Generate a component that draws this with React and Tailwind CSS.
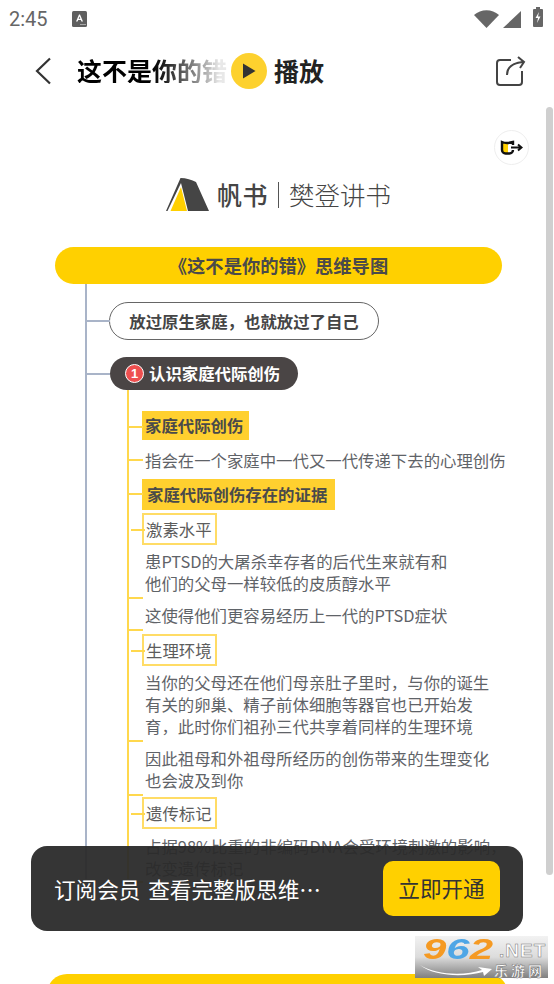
const cjk = { fontFamily: '"Noto Sans CJK SC", "Noto Sans", sans-serif' };

function Conn({ top }) {
  return <span className="absolute left-[-13px] h-[2px] w-[14px] bg-[#ffd84d]" style={{ top }} />;
}

function Fill({ children, conn, mt, w, h, pl }) {
  return (
    <div className={`relative ${mt} ${w} ${h} ${pl} flex items-center bg-[#ffd02f] text-[16.4px] font-bold text-[#4a4a4a]`}>
      <Conn top={conn} />
      {children}
    </div>
  );
}

function Outline({ children, conn, mt }) {
  return (
    <div className={`relative ${mt} w-[75px] h-[32px] pl-[2px] flex items-center border-2 border-[#ffdc66] text-[16.4px] text-[#5c5c5c]`}>
      <Conn top={conn} />
      {children}
    </div>
  );
}

function Body({ children, conn, mt }) {
  return (
    <div className={`relative ${mt} pl-[3px] text-[16.4px] leading-[22px] text-[#5f6368] whitespace-nowrap`}>
      <Conn top={conn} />
      {children}
    </div>
  );
}

export default function App() {
  return (
    <div className="relative w-[554px] h-[984px] overflow-hidden bg-white flex flex-col" style={cjk}>
      {/* status bar */}
      <div className="h-[40px] flex items-center pl-[9px] pr-[11px] shrink-0">
        <span className="text-[20px] text-[#666] w-[63px] mb-[2px]" style={{ fontFamily: "Roboto, sans-serif" }}>2:45</span>
        <svg className="mb-[2px]" width="15" height="16" viewBox="0 0 15 16">
          <rect width="15" height="16" rx="1.5" fill="#5f5f5f" />
          <path d="M4 10.5 L7 3.5 h1 L11 10.5 h-1.6 l-.6-1.5 h-2.6 l-.6 1.5z M6.7 7.8 h1.6 L7.5 5.6z" fill="#fff" />
          <circle cx="9" cy="13.5" r=".6" fill="#fff" /><circle cx="11" cy="13.5" r=".6" fill="#fff" /><circle cx="13" cy="13.5" r=".6" fill="#fff" />
        </svg>
        <div className="flex-1" />
        <svg width="25" height="18" viewBox="0 0 25 18" className="mb-[2px]"><path d="M0 5 C7 -1.5 18 -1.5 25 5 L12.5 18z" fill="#666" /></svg>
        <svg className="ml-[4px] mb-[2px]" width="18" height="17" viewBox="0 0 18 17"><path d="M18 0 V17 H0z" fill="#666" /></svg>
        <svg className="ml-[12px] mb-[6px]" width="10" height="20" viewBox="0 0 10 20">
          <path d="M3 0 h4 v2 h2 a1 1 0 0 1 1 1 v16 a1 1 0 0 1 -1 1 h-8 a1 1 0 0 1 -1 -1 v-16 a1 1 0 0 1 1 -1 h2z" fill="#666" />
          <path d="M6 5 L2.5 11 h2.5 l-1 5 L7.5 9.5 h-2.5z" fill="#fff" />
        </svg>
      </div>

      {/* header */}
      <div className="h-[62px] shrink-0 flex items-center pl-[35px] pr-[28px]">
        <svg width="17" height="28" viewBox="0 0 17 28" fill="none" stroke="#333" strokeWidth="2.2"><path d="M15 1.5 L2 14 L15 26.5" /></svg>
        <span className="ml-[25px] mb-[2px] text-[25px] font-bold leading-none bg-linear-to-r from-black from-45% to-[#e8e8e8] to-95% bg-clip-text text-transparent whitespace-nowrap">这不是你的错</span>
        <span className="ml-[4px] w-[36px] h-[36px] rounded-full bg-[#fdd12e] flex items-center justify-center shrink-0">
          <svg width="14" height="16" viewBox="0 0 14 16"><path d="M1 0.5 L13.5 8 L1 15.5z" fill="#333" /></svg>
        </span>
        <span className="ml-[7px] mb-[2px] text-[25px] font-bold leading-none text-[#222] whitespace-nowrap">播放</span>
        <div className="flex-1" />
        <svg width="30" height="30" viewBox="0 0 30 30" fill="none" stroke="#444" strokeWidth="2">
          <path d="M15 4 H4 a3 3 0 0 0 -3 3 V26 a3 3 0 0 0 3 3 H23 a3 3 0 0 0 3 -3 V15" />
          <path d="M11 19 C11 12 16 7 27 6 M22 1 L28 6 L24 12" />
        </svg>
      </div>

      {/* scroll content */}
      <div className="flex-1 flex flex-col pl-[55px]">
        {/* logo */}
        <div className="mt-[74px] h-[37px] ml-[111px] flex items-center text-[#454545] whitespace-nowrap">
          <svg width="43" height="33" viewBox="0 0 43 33">
            <path d="M0 33 L14.5 0 C20 0 26 2 30 4 L43 33 H22 L15 5 L1.5 33z" fill="#454545" />
            <path d="M4.5 33 L15 9 L21 33z" fill="#ffd000" />
          </svg>
          <span className="ml-[8px] mb-[1px] text-[25px] tracking-[0.5px] font-medium leading-none">帆书</span>
          <span className="ml-[10px] w-[1px] h-[26px] bg-[#555]" />
          <span className="ml-[10px] mb-[2px] text-[25.5px] font-light leading-none">樊登讲书</span>
        </div>

        {/* root */}
        <div className="mt-[34px] w-[447px] h-[37px] rounded-[19px] bg-[#ffd000] flex items-center justify-center text-[18.3px] font-bold text-[#4a4a4a] shrink-0">
          《这不是你的错》思维导图
        </div>

        {/* trunk */}
        <div className="ml-[30px] w-[420px] border-l-2 border-[#a9b4c8] pt-[18px]">
          <div className="relative ml-[22px] w-[270px] h-[38px] rounded-[19px] border-[1.5px] border-[#666] flex items-center justify-center text-[16.4px] font-bold text-[#454545]">
            <span className="absolute left-[-24px] top-[17px] w-[24px] h-[2px] bg-[#a9b4c8]" />
            放过原生家庭，也就放过了自己
          </div>
          <div className="relative mt-[17px] ml-[23px] w-[188px] h-[33px] rounded-[17px] bg-[#4a4545] flex items-center pl-[15px] gap-[5px] text-[16.4px] font-bold text-white">
            <span className="absolute left-[-25px] top-[16px] w-[25px] h-[2px] bg-[#a9b4c8]" />
            <span className="w-[19px] h-[19px] rounded-full bg-[#ee4f4f] border-[1.5px] border-white flex items-center justify-center text-[13px] leading-none" style={{ fontFamily: '"Liberation Sans", sans-serif' }}>1</span>
            认识家庭代际创伤
          </div>

          {/* branch */}
          <div className="ml-[40px] border-l-2 border-[#ffd84d] pl-[13px] pt-[21px]">
            <Fill mt="mt-0" w="w-[107px]" h="h-[29px]" pl="pl-[3px]" conn={15}>家庭代际创伤</Fill>
            <Body mt="mt-[9px]" conn={10}>指会在一个家庭中一代又一代传递下去的心理创伤</Body>
            <Fill mt="mt-[8px]" w="w-[193px]" h="h-[31px]" pl="pl-[5px]" conn={14}>家庭代际创伤存在的证据</Fill>
            <Outline mt="mt-[3px]" conn={14}>激素水平</Outline>
            <Body mt="mt-[5px]" conn={47}>患PTSD的大屠杀幸存者的后代生来就有和<br />他们的父母一样较低的皮质醇水平</Body>
            <Body mt="mt-[10px]" conn={25}>这使得他们更容易经历上一代的PTSD症状</Body>
            <Outline mt="mt-[8px]" conn={14}>生理环境</Outline>
            <Body mt="mt-[5px]" conn={69}>当你的父母还在他们母亲肚子里时，与你的诞生<br />有关的卵巢、精子前体细胞等器官也已开始发<br />育，此时你们祖孙三代共享着同样的生理环境</Body>
            <Body mt="mt-[10px]" conn={47}>因此祖母和外祖母所经历的创伤带来的生理变化<br />也会波及到你</Body>
            <Outline mt="mt-[6px]" conn={14}>遗传标记</Outline>
            <Body mt="mt-[6px]" conn={46}>占据98%比重的非编码DNA会受环境刺激的影响，<br />改变遗传标记</Body>
          </div>
        </div>

        <div className="mt-[95px] ml-[-8px] w-[461px] h-[60px] rounded-[20px] bg-[#ffd000] shrink-0" />
      </div>

      {/* scrollbar */}
      <div className="absolute left-[546px] top-[107px] w-[7px] h-[768px] rounded-full bg-[#cfcfcf]" />

      {/* float button */}
      <div className="absolute left-[494px] top-[130px] w-[35px] h-[35px] rounded-full bg-white border border-[#eee] flex items-center justify-center">
        <svg width="23" height="15" viewBox="0 0 23 15">
          <path d="M2 2 C5 3.2 9 3.2 13 2 V10 a3.5 3.5 0 0 1 -3.5 3.5 H5.5 a3.5 3.5 0 0 1 -3.5 -3.5z" fill="#fff" />
          <path d="M2 2 C4 2.8 6 3 8 3 V13.5 H5.5 a3.5 3.5 0 0 1 -3.5 -3.5z" fill="#ffd000" />
          <path d="M13 5 V2 C9 3.2 5 3.2 2 2 V10 a3.5 3.5 0 0 0 3.5 3.5 H9.5 a3.5 3.5 0 0 0 3.5 -3.5" fill="none" stroke="#111" strokeWidth="2.4" />
          <path d="M11 7.5 H21 M18 4.5 L21.5 7.5 L18 10.5" fill="none" stroke="#111" strokeWidth="2" />
        </svg>
      </div>

      {/* subscribe bar */}
      <div className="absolute left-[31px] top-[846px] w-[492px] h-[85px] rounded-[16px] bg-[#2a2a2a]/95 flex items-center pl-[23px] pr-[23px]">
        <span className="flex-1 mt-[2px] text-[21.6px] [word-spacing:3px] text-white whitespace-nowrap">订阅会员 查看完整版思维…</span>
        <span className="w-[117px] h-[55px] rounded-[10px] bg-[#ffd000] flex items-center justify-center text-[21.6px] text-[#333]">立即开通</span>
      </div>

      {/* watermark */}
      <div className="absolute left-[415px] top-[936px] w-[133px] h-[42px] bg-linear-to-b from-[#f2f2f2] via-[#dcdcdc] to-[#808080] flex flex-col">
        <div className="flex items-end h-[26px] pl-[8px]">
          <span className="block w-[76px] shrink-0 origin-left scale-x-[1.4] text-[30px] leading-[26px] font-bold italic" style={{ fontFamily: '"Liberation Sans", sans-serif' }}>
            <span className="text-[#f59a23]">9</span><span className="text-[#4ea6e6]">6</span><span className="text-[#f59a23]">2</span>
          </span>
          <span className="text-[19px] leading-[22px] tracking-[1px] font-bold text-white [-webkit-text-stroke:0.5px_#777]" style={{ fontFamily: '"Liberation Sans", sans-serif' }}>.NET</span>
        </div>
        <div className="flex items-center h-[16px] pl-[5px]">
          <svg width="72" height="14" viewBox="0 0 72 14"><path d="M0 2 C15 12 45 13 62 7 L58 4 L72 6 L64 13 L63 9 C45 14 15 14 0 2z" fill="#fff" /></svg>
          <span className="ml-[2px] text-[14px] leading-none font-bold tracking-[3px] whitespace-nowrap text-white [-webkit-text-stroke:0.4px_#666]">乐游网</span>
        </div>
      </div>
    </div>
  );
}
